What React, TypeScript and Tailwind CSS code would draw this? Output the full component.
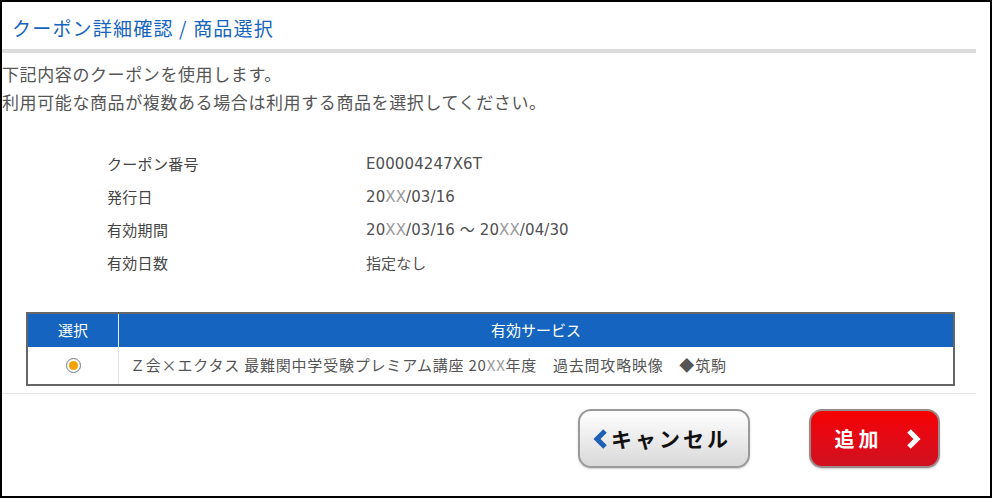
const font = { fontFamily: '"Noto Sans CJK JP", "Noto Sans", sans-serif' }
const latin = { fontFamily: '"DejaVu Sans", "Noto Sans CJK JP", sans-serif' }

const Xx = () => <span className="text-[#9a9a9a]">XX</span>

const details = [
  { label: 'クーポン番号', value: <>E00004247X6T</> },
  {
    label: '発行日',
    value: (
      <>
        20<Xx />/03/16
      </>
    ),
  },
  {
    label: '有効期間',
    value: (
      <>
        20<Xx />/03/16 ～ 20<Xx />/04/30
      </>
    ),
  },
  { label: '有効日数', value: <span style={font}>指定なし</span> },
]

function ChevronLeft() {
  return (
    <svg width="16" height="22" viewBox="0 0 16 22">
      <polyline points="12,3 4,11 12,19" fill="none" stroke="#1f5fb5" strokeWidth="5" strokeLinejoin="miter" />
    </svg>
  )
}

function ChevronRight() {
  return (
    <svg width="16" height="22" viewBox="0 0 16 22">
      <polyline points="4,3 12,11 4,19" fill="none" stroke="#ffffff" strokeWidth="5" strokeLinejoin="miter" />
    </svg>
  )
}

export default function App() {
  return (
    <div style={font} className="box-border h-[498px] w-[992px] border-2 border-black bg-white">
      <div className="flex h-[47px] items-center pl-[10px] pt-[6px] text-[19px] tracking-[1.2px] text-[#1565c0]">
        クーポン詳細確認 / 商品選択
      </div>
      <div className="mr-[14px] h-[4px] bg-[#dddddd]" />

      <div className="pt-[7px] text-[17px] leading-[28px] tracking-[0.6px] text-[#555555]">
        <p>下記内容のクーポンを使用します。</p>
        <p>利用可能な商品が複数ある場合は利用する商品を選択してください。</p>
      </div>

      <div className="mt-[32px] text-[15px] text-[#444444]">
        {details.map((row) => (
          <div key={row.label} className="flex h-[33px] items-center">
            <div className="w-[364px] pl-[105px] tracking-[0.3px]">{row.label}</div>
            <div style={latin} className="tracking-[0.1px] text-[#505050]">
              {row.value}
            </div>
          </div>
        ))}
      </div>

      <div className="ml-[24px] mt-[32px] w-[929px] border-2 border-[#666666] text-[15px]">
        <div className="flex h-[33px] bg-[#1565c0] text-white">
          <div className="flex w-[91px] items-center justify-center border-r border-[#e6eef8]">選択</div>
          <div className="flex flex-1 items-center justify-center">有効サービス</div>
        </div>
        <div className="flex h-[37px] text-[#555555]">
          <div className="flex w-[91px] items-center justify-center border-r border-[#e6e6e6]">
            <div className="flex h-[15px] w-[15px] items-center justify-center rounded-full border border-[#777777] bg-white">
              <div className="h-[9px] w-[9px] rounded-full bg-[#f5a200]" />
            </div>
          </div>
          <div className="flex flex-1 items-center pl-[11px] tracking-[0.8px]">
            Ｚ会×エクタス 最難関中学受験プレミアム講座 20<Xx />年度　過去問攻略映像　◆筑駒
          </div>
        </div>
      </div>

      <div className="mr-[14px] mt-[7px] h-px bg-[#e4e4e4]" />

      <div className="flex pl-[576px] pt-[15px]">
        <button
          type="button"
          className="flex h-[59px] w-[172px] items-center justify-center gap-[2px] rounded-[13px] border-2 border-[#9a9a9a] bg-gradient-to-b from-[#ffffff] to-[#d9d9d9] pr-[4px] text-[21px] font-bold tracking-[3px] text-[#111111] shadow-[0_1px_2px_rgba(0,0,0,0.2)]"
        >
          <ChevronLeft />
          キャンセル
        </button>
        <button
          type="button"
          className="ml-[59px] flex h-[59px] w-[131px] items-center justify-center gap-[22px] rounded-[13px] border-2 border-[#9a8a8a] bg-gradient-to-b from-[#f60000] to-[#d0101f] pl-[6px] text-[20px] font-bold tracking-[4px] text-white shadow-[0_1px_2px_rgba(0,0,0,0.2)]"
        >
          追加
          <ChevronRight />
        </button>
      </div>
    </div>
  )
}
